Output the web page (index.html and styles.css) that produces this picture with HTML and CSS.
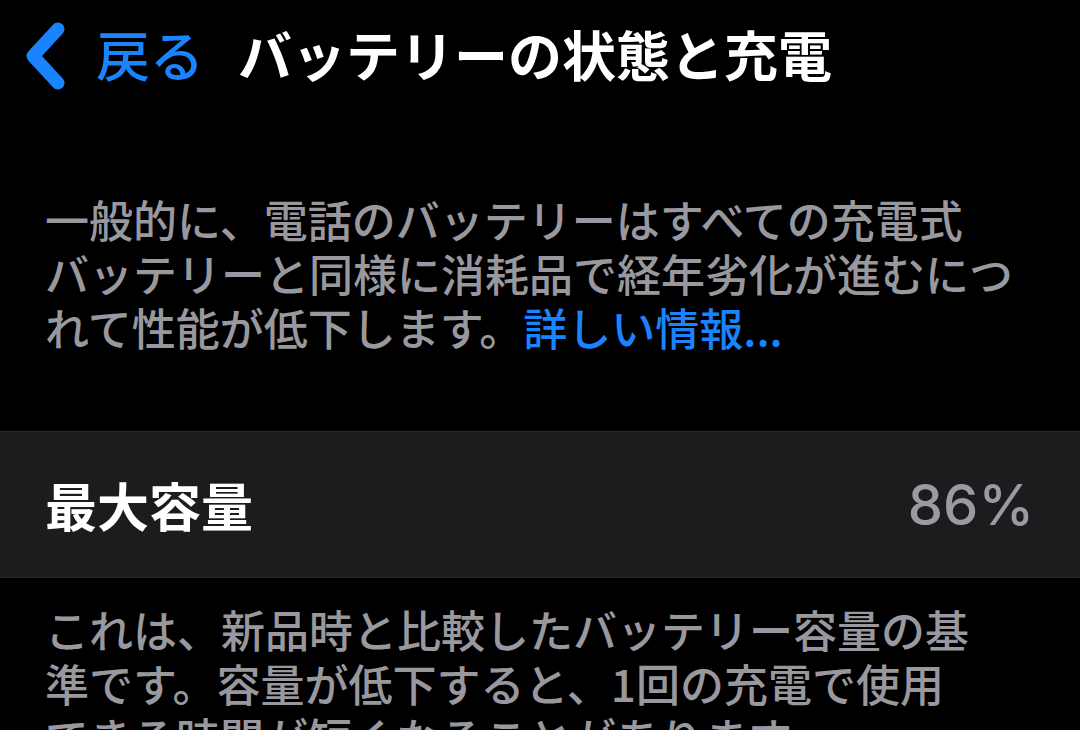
FILE: index.html
```html
<!DOCTYPE html>
<html lang="ja">
<head>
<meta charset="utf-8">
<title>バッテリーの状態と充電</title>
<link rel="stylesheet" href="styles.css">
</head>
<body>
<div class="screen">
  <header class="nav">
    <a class="back" href="#">
      <svg class="chevron" viewBox="0 0 50 78" width="50" height="78" aria-hidden="true">
        <polyline points="38,10 13,37 38,64" fill="none" stroke="#1a84ff" stroke-width="13" stroke-linecap="round" stroke-linejoin="round"/>
      </svg>
      <span class="back-label">戻る</span>
    </a>
    <h1 class="title">バッテリーの状態と充電</h1>
  </header>

  <p class="note first">一般的に、電話のバッテリーはすべての充電式<br>バッテリーと同様に消耗品で経年劣化が進むにつ<br>れて性能が低下します。<a class="link" href="#">詳しい情報...</a></p>

  <div class="row">
    <span class="row-label">最大容量</span>
    <span class="row-value">86%</span>
  </div>

  <p class="note second">これは、新品時と比較したバッテリー容量の基<br>準です。容量が低下すると、1回の充電で使用<br>できる時間が短くなることがあります。</p>
</div>
</body>
</html>
```

FILE: styles.css
```css
html, body {
  margin: 0;
  padding: 0;
  background: #000;
}

body {
  width: 1080px;
  height: 730px;
  overflow: hidden;
  font-family: "Noto Sans CJK JP", "Noto Sans", sans-serif;
  color: #fff;
}

.screen {
  display: flex;
  flex-direction: column;
}

.nav {
  display: flex;
  align-items: center;
  height: 108px;
}

.back {
  display: flex;
  align-items: center;
  text-decoration: none;
  color: #1a84ff;
}

.chevron {
  display: block;
  margin-left: 20px;
  margin-top: 8px;
}

.back-label {
  margin-left: 26px;
  font-size: 54px;
  line-height: 1;
  font-weight: 500;
}

.title {
  margin: 0 0 0 34px;
  font-size: 54px;
  line-height: 1;
  font-weight: 700;
  color: #fff;
  white-space: nowrap;
}

.note {
  margin: 0;
  padding: 0 45px;
  font-size: 44px;
  line-height: 54px;
  font-weight: 500;
  color: #98989e;
  white-space: nowrap;
}

.note.first {
  margin-top: 84px;
}

.link {
  color: #1a84ff;
  text-decoration: none;
}

.row {
  margin-top: 77px;
  height: 145px;
  display: flex;
  align-items: center;
  justify-content: space-between;
  padding: 0 46px 0 45px;
  background: #1c1c1e;
  border-top: 1px solid #2c2c2e;
  border-bottom: 1px solid #262628;
}

.row-label {
  font-size: 52px;
  line-height: 1;
  font-weight: 700;
  color: #fff;
}

.row-value {
  font-family: Inter, "Liberation Sans", sans-serif;
  font-size: 56px;
  line-height: 1;
  font-weight: 500;
  color: #9a9aa0;
}

.note.second {
  margin-top: 24px;
}
```
